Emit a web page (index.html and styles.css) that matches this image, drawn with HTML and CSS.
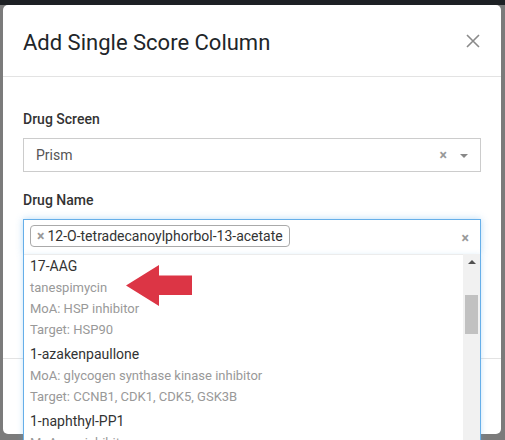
FILE: index.html
```
<!DOCTYPE html>
<html>
<head>
<meta charset="utf-8">
<link rel="stylesheet" href="styles.css">
</head>
<body>
<div class="topbar"></div>
<div class="modal">
  <div class="modal-header">
    <h5 class="modal-title">Add Single Score Column</h5>
    <span class="close">
      <svg width="14" height="14" viewBox="0 0 14 14"><path d="M1 1L13 13M13 1L1 13" stroke="#8a8a8a" stroke-width="1.6" fill="none"/></svg>
    </span>
  </div>
  <div class="modal-body">
    <div class="form-group">
      <label class="form-label">Drug Screen</label>
      <div class="select">
        <span class="sel-value">Prism</span>
        <span class="sel-clear">×</span>
        <span class="caret"></span>
      </div>
    </div>
    <div class="form-group">
      <label class="form-label">Drug Name</label>
      <div class="multi">
        <div class="multi-input">
          <span class="tag"><span class="tag-x">×</span>12-O-tetradecanoylphorbol-13-acetate</span>
          <span class="multi-clear">×</span>
        </div>
        <div class="dropdown">
          <div class="list">
            <div class="item">
              <div class="item-title">17-AAG</div>
              <div class="item-sub">tanespimycin</div>
              <div class="item-sub">MoA: HSP inhibitor</div>
              <div class="item-sub">Target: HSP90</div>
            </div>
            <div class="item">
              <div class="item-title">1-azakenpaullone</div>
              <div class="item-sub">MoA: glycogen synthase kinase inhibitor</div>
              <div class="item-sub">Target: CCNB1, CDK1, CDK5, GSK3B</div>
            </div>
            <div class="item">
              <div class="item-title">1-naphthyl-PP1</div>
              <div class="item-sub">MoA: src inhibitor</div>
              <div class="item-sub">Target: SRC</div>
            </div>
          </div>
          <div class="scrollbar">
            <span class="sb-up"></span>
            <span class="sb-thumb"></span>
          </div>
          <svg class="arrow" width="66" height="41" viewBox="0 0 66 41"><polygon points="0,20.5 33,0 33,10.5 66,10.5 66,30 33,30 33,41" fill="#dc3545"/></svg>
        </div>
      </div>
    </div>
  </div>
  <div class="modal-footer"></div>
</div>
</body>
</html>
```
FILE: styles.css
```
html, body {
  margin: 0;
  height: 440px;
  overflow: hidden;
}
body {
  background: #7b7b7b;
  font-family: Roboto, "Liberation Sans", sans-serif;
  color: #333;
}
.topbar {
  height: 5px;
  background: #1d2024;
}
.modal {
  margin: 0 4px 0 3px;
  background: #fff;
  border-radius: 5px;
  position: relative;
}
.modal-header {
  display: flex;
  align-items: center;
  justify-content: space-between;
  height: 72px;
  box-sizing: border-box;
  padding: 1px 21px 0 20px;
  border-bottom: 1px solid #e3e3e3;
}
.modal-title {
  margin: 0;
  padding-top: 2px;
  font-size: 22px;
  font-weight: 400;
  line-height: 33px;
  color: #212529;
}
.close {
  display: flex;
  width: 14px;
  height: 14px;
}
.modal-body {
  padding: 32px 20px 86px;
}
.form-group {
  margin-bottom: 18px;
}
.form-label {
  display: block;
  font-size: 14px;
  font-weight: 500;
  line-height: 21px;
  margin-bottom: 8px;
  color: #333;
}
.select {
  height: 34px;
  box-sizing: border-box;
  border: 1px solid #ccc;
  display: flex;
  align-items: center;
  padding: 0 12px 0 12px;
}
.sel-value {
  flex: 1;
  font-size: 14px;
  line-height: 21px;
  color: #555;
}
.sel-clear {
  font-size: 14px;
  font-weight: 700;
  color: #999;
  margin-right: 13px;
}
.caret {
  width: 0;
  height: 0;
  border-left: 4px solid transparent;
  border-right: 4px solid transparent;
  border-top: 4px solid #888;
  margin-top: 2px;
}
.multi {
  position: relative;
}
.multi-input {
  height: 35px;
  box-sizing: border-box;
  border: 1px solid #66afe9;
  border-bottom: 0;
  display: flex;
  align-items: flex-start;
  padding: 5px 11px 0 6px;
  box-shadow: 0 0 7px rgba(102, 175, 233, 0.45);
}
.tag {
  display: flex;
  align-items: center;
  height: 22px;
  box-sizing: border-box;
  border: 1px solid #aaa;
  border-radius: 4px;
  padding: 0 6px 0 6px;
  font-size: 14px;
  line-height: 20px;
  color: #333;
}
.tag-x {
  font-weight: 700;
  color: #999;
  margin-right: 3px;
}
.multi-clear {
  margin-left: auto;
  margin-top: 5px;
  font-size: 14px;
  font-weight: 700;
  color: #999;
}
.dropdown {
  position: absolute;
  top: 100%;
  left: 0;
  right: 0;
  height: 200px;
  background: #fff;
  border: 1px solid #66afe9;
  border-top: 0;
  display: flex;
  box-shadow: 0 2px 6px rgba(102, 175, 233, 0.35), inset 0 1px 0 #ececec;
}
.list {
  flex: 1;
  overflow: hidden;
}
.item {
  padding: 2px 6px;
}
.item-title {
  font-size: 14px;
  line-height: 21px;
  color: #333;
}
.item-sub {
  font-size: 13px;
  line-height: 21px;
  color: #999;
}
.scrollbar {
  width: 17px;
  background: #f1f1f1;
  display: flex;
  flex-direction: column;
  align-items: center;
}
.sb-up {
  margin-top: 6px;
  width: 0;
  height: 0;
  border-left: 4px solid transparent;
  border-right: 4px solid transparent;
  border-bottom: 4px solid #505050;
}
.sb-thumb {
  margin-top: 31px;
  width: 13px;
  height: 39px;
  background: #c1c1c1;
}
.arrow {
  position: absolute;
  left: 102px;
  top: 11px;
}
.modal-footer {
  height: 76px;
  box-sizing: border-box;
  border-top: 1px solid #e3e3e3;
}
```
